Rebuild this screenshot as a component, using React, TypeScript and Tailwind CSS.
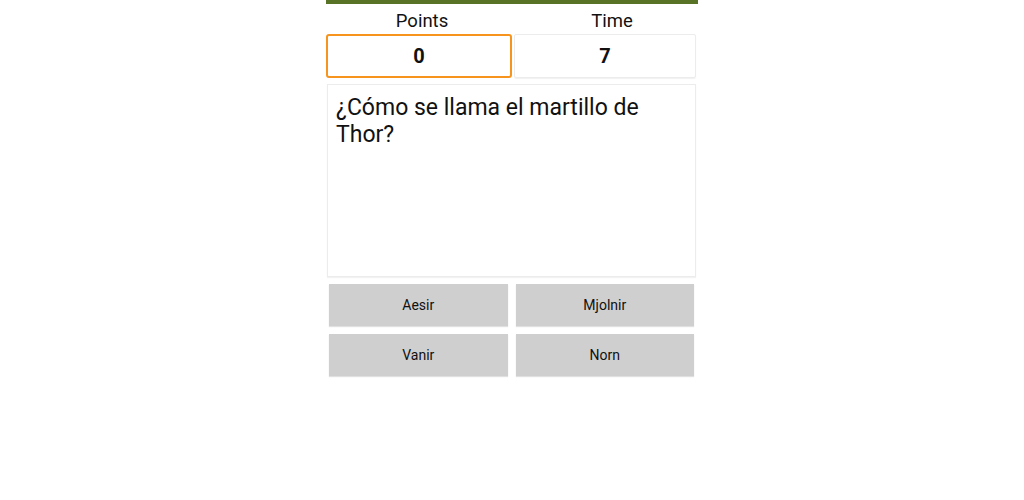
const answers = ['Aesir', 'Mjolnir', 'Vanir', 'Norn'];

const App = () => {
  return (
    <div className="flex min-h-[500px] w-full justify-center bg-white font-['Roboto',sans-serif] text-[#111]">
      <div className="flex w-[372px] flex-col">
        <div className="h-[4px] bg-[#587226]" />

        <div className="grid h-[30px] grid-cols-[188px_184px] items-center pt-[3px] text-[18.5px] leading-[22px]">
          <div className="pl-[4px] text-center">Points</div>
          <div className="pl-[12px] text-center">Time</div>
        </div>

        <div className="flex h-[44px] items-stretch">
          <div className="flex w-[186px] items-center justify-center rounded-[3px] border-2 border-[#f7941d] text-[20px] font-bold">
            0
          </div>
          <div className="ml-[2px] flex w-[182px] items-center justify-center rounded-[2px] border border-[#ececec] text-[20px] font-bold shadow-[0_1px_1px_rgba(0,0,0,0.06)]">
            7
          </div>
        </div>

        <div className="ml-[1px] mr-[2px] mt-[6px] h-[193px] border border-[#ececec] px-[8px] pt-[9px] text-[23px] leading-[27px] shadow-[0_1px_1px_rgba(0,0,0,0.05)]">
          ¿Cómo se llama el martillo de Thor?
        </div>

        <div className="ml-[3px] mr-[4px] mt-[7px] grid grid-cols-2 gap-x-[8px] gap-y-[8px]">
          {answers.map((a) => (
            <button
              key={a}
              className="flex h-[42px] items-center justify-center bg-[#cfcfcf] text-[14px] text-[#111] shadow-[0_1px_1px_rgba(0,0,0,0.12)]"
            >
              {a}
            </button>
          ))}
        </div>
      </div>
    </div>
  );
};

export default App;
